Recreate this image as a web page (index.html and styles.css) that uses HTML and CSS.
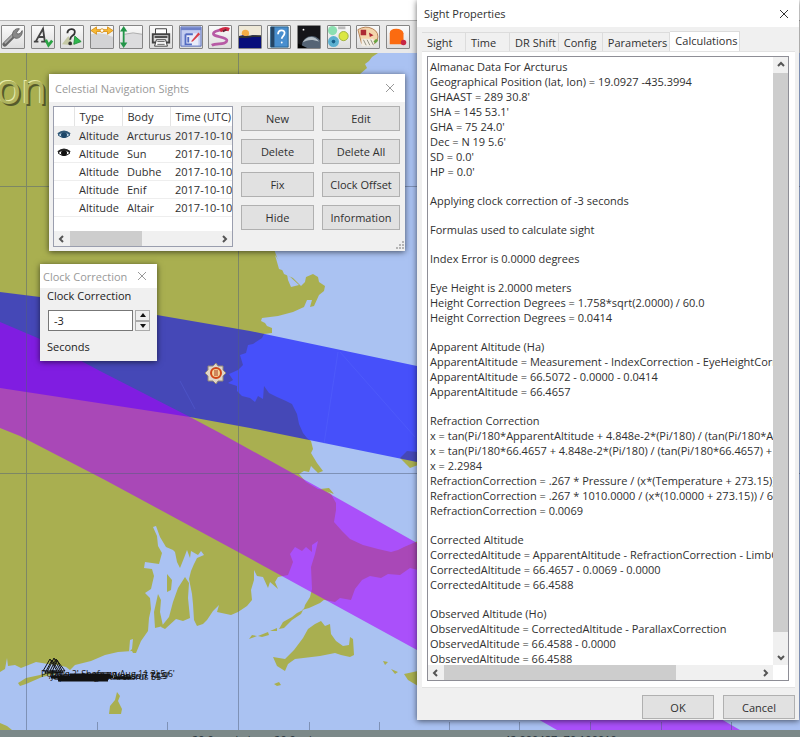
FILE: index.html
```html
<!DOCTYPE html>
<html lang="en">
<head>
<meta charset="utf-8">
<title>Celestial Navigation</title>
<link rel="stylesheet" href="styles.css">
</head>
<body>
<div class="desktop">
  <div class="titlestrip"></div>
  <div class="toolbar" role="toolbar" aria-label="Chart tools">
    <button class="tool" aria-label="Options"><svg viewBox="0 0 24 24"><path d="M3 20L14 9" stroke="#666" stroke-width="5" stroke-linecap="round"/><path d="M3 19L13 9" stroke="#aaa" stroke-width="2"/><path d="M12 12c-2-5 2-10 7-9l-3 4 1 2 3-1 2-3c1 5-4 10-8 8z" fill="#888" stroke="#666"/></svg></button>
    <button class="tool" aria-label="Text"><svg viewBox="0 0 24 24"><path d="M2 17h5M10 17h6M4 17L12 3l2 14M7 12h6" fill="none" stroke="#444" stroke-width="2"/><path d="M15 15l3 6 4-5" fill="none" stroke="#2ba344" stroke-width="3"/></svg></button>
    <button class="tool" aria-label="Query"><svg viewBox="0 0 24 24"><path d="M1 20l7-9 5 10z" fill="#c5c9a5"/><path d="M15 11l7 6-8 3z" fill="#2eb84c" stroke="#258d3c"/><path d="M7 8c0-6 9-6 8-1 0 4-5 3-5 8" fill="none" stroke="#333" stroke-width="2"/><circle cx="10" cy="19" r="2" fill="#333"/></svg></button>
    <button class="tool" aria-label="Horizontal scale"><svg viewBox="0 0 24 24"><path d="M0 9q12-3 24 3v12H0z" fill="#d3d3d5"/><path d="M0 5l6-4v3h12V1l6 4-6 4V6H6v3z" fill="#f8ba35" stroke="#da941d"/><circle cx="12" cy="5" r="2" fill="#fff" stroke="#da941d"/></svg></button>
    <button class="tool" aria-label="Vertical scale"><svg viewBox="0 0 24 24"><path d="M5 9q9-3 19 0v15H5z" fill="#dcdcde"/><path d="M5 9q9-3 19 0" fill="none" stroke="#aaa"/><path d="M4 0l4 6H5v12h3l-4 6-4-6h3V6H0z" fill="#239549"/></svg></button>
    <button class="tool" aria-label="Print"><svg viewBox="0 0 24 24"><path d="M6 9V3h12v6" fill="#fff" stroke="#333"/><path d="M3 9h18v9H3z" fill="#ddd" stroke="#444" stroke-width="2"/><path d="M5 12h14" stroke="#444" stroke-width="2"/><path d="M7 15h10l2 7H5z" fill="#fff" stroke="#333"/><path d="M8 17h8M8 20h8" stroke="#555"/></svg></button>
    <button class="tool" aria-label="Route manager"><svg viewBox="0 0 24 24"><path d="M1 1h22v21H1z" fill="#c3cdf0" stroke="#5369b7"/><path d="M1 3h22" stroke="#6d80c9" stroke-width="3"/><path d="M6 8h14v13H6z" fill="#e9ecfa"/><path d="M6 9h8M6 9v11h7M9 12v6" fill="none" stroke="#526ac1" stroke-width="2"/><path d="M12 17l8-10 2 2-8 8z" fill="#d83f49"/></svg></button>
    <button class="tool" aria-label="Track"><svg viewBox="0 0 24 24"><path d="M21 4C8 3 2 8 6 10s16 3 13 7-11 1-16 4" fill="none" stroke="#b75aa5" stroke-width="3"/><path d="M22 4q-5-2-10 1" fill="none" stroke="#d12b45" stroke-width="4"/><path d="M19 4l-4 2" stroke="#5b2636" stroke-width="2"/></svg></button>
    <button class="tool" aria-label="Tides"><svg viewBox="0 0 24 24"><path d="M0 0h24v24H0z" fill="#eee8d7"/><circle cx="7" cy="8" r="4" fill="#f5ad45"/><path d="M0 11l4-1 5 2 6-2 9 1v13H0z" fill="#080f7b"/><path d="M0 12h8l7-1h9" stroke="#303335" stroke-width="2"/></svg></button>
    <button class="tool" aria-label="Help"><svg viewBox="0 0 24 24"><path d="M3 1h19v22H3z" fill="#488ece" stroke="#23628f"/><path d="M5 1v22" stroke="#254564" stroke-width="4"/><path d="M11 9c0-6 8-5 7-1 0 3-3 3-3 6" fill="none" stroke="#fff" stroke-width="2"/><circle cx="15" cy="18" r="1" fill="#fff"/></svg></button>
    <button class="tool" aria-label="Celestial navigation"><svg viewBox="0 0 24 24"><path d="M0 0h24v24H0z" fill="#151519"/><circle cx="15" cy="22" r="11" fill="#556475"/><path d="M5 18c4-8 14-8 18-1-8-3-13-2-18 1z" fill="#b5bfc6"/><path d="M0 19l10 5H0z" fill="#000"/><circle cx="6" cy="4" r="1" fill="#fff"/></svg></button>
    <button class="tool" aria-label="Satellites"><svg viewBox="0 0 24 24"><circle cx="5" cy="5" r="5" fill="#8ce0b1"/><circle cx="17" cy="11" r="5" fill="#dbe742" stroke="#9caf3b"/><circle cx="6" cy="17" r="6" fill="#5cb0d0"/><circle cx="6" cy="17" r="2" fill="#175d87"/><path d="M11 2h8" stroke="#bbb" stroke-width="3"/></svg></button>
    <button class="tool" aria-label="Palette"><svg viewBox="0 0 24 24"><path d="M1 4q8-5 16-1t5 13l-5 5-12-2z" fill="#f4d5ab" stroke="#b17b4f"/><path d="M4 4h6v6H4zM13 7l5 3-4 2z" fill="#ad2934"/><path d="M5 14h13l1 8H5z" fill="#f3eee4"/><path d="M7 15l3 6M11 15l3 6M15 15l3 6" stroke="#8b8b7c"/><path d="M19 18l3-3" stroke="#67a443" stroke-width="3"/></svg></button>
    <button class="tool" aria-label="Record"><svg viewBox="0 0 24 24"><path d="M3 20V8q0-5 7-5t8 5v12z" fill="#fb6b10"/><circle cx="18" cy="18" r="3" fill="#c62745"/></svg></button>
  </div>
  <main class="chart">
    <svg class="map" viewBox="0 53 800 677" preserveAspectRatio="xMinYMin slice" aria-label="Nautical chart">
      <path class="water" d="M0 53h1600v1400H0z"/>
      <g class="land">
        <path d="M0 53H378L372 57 369 61 365 64 367 68 360 74 340 100 300 180 272 240 275 252 278 260 281 267 284 274 293 278 301 286 305 282 306 277 313 274 318 277 319 282 325 286 324 291 319 295 314 306 310 307 312 300 307 300 304 307 293 312 278 316 262 318 261 321 265 323 267 326 272 328 272 333 264 334 262 338 253 344 248 345 246 353 240 355 243 365 238 370 229 374 233 380 228 383 237 386 237 391 242 396 250 398 255 402 258 396 263 399 264 386 269 393 277 397 286 401 292 404 297 414 299 424 303 433 307 438 311 441 313 449 311 453 317 463 323 471 318 473 311 466 309 472 304 471 299 474 306 482 318 489 325 490 331 494 336 503 336 510 334 522 342 531 350 539 363 545 378 549 391 552 398 550 404 547 418 541V570L410 568 400 575 388 574 381 578 370 576 362 580 355 589 351 600 340 598 335 602 325 600 314 600 311 606 304 609 305 605 310 597 312 589 311 567 315 554 318 541 312 545 312 552 306 547 302 551 295 547 290 554 293 562 290 570 288 575 278 577 275 582 278 589 270 582 268 588 263 577 257 576 254 570 254 580 251 590 252 600 247 606 238 612 231 615 217 612 219 605 213 611 207 620 203 624 197 626 194 620 193 604 192 594 189 579 191 571 194 564 197 558 204 555 201 551 198 555 191 551 190 558 187 550 184 558 180 568 177 562 175 552 173 550 166 547 160 537 156 526 153 527 157 536 158 546 162 553 159 564 145 562 144 568 152 569 154 576 151 589 145 593 150 598 151 609 149 618 148 631 141 641 136 653 133 653 132 651 118 652 105 655 91 661 75 665 70 670 66 667 58 665 48 664 36 662 21 668 15 665 8 666 7 658 5 669 0 672z"/>
        <path d="M158 594L161 600 160 612 163 626 155 628 154 612zM167 574L172 580 171 590 167 592 167 582zM185 577L189 583 188 598 190 618 183 621 176 619 165 629 161 627 169 617 173 602 178 588z"/>
        <path d="M18 683L26 678 40 675 50 671 56 674 42 677 26 684 20 686zM117 692L120 696 118 701 122 709 121 714 109 714 110 706 115 700zM273 657L285 659 294 650 303 638 308 629 315 624 321 621 325 626 330 624 331 634 336 641 343 646 349 645 350 637 353 639 354 655 350 657 341 655 335 653 320 656 295 659 288 664 285 671 277 666zM249 639L252 635 257 636zM258 636L268 632 269 635 262 637zM270 631L277 628 277 631zM279 629L283 622 292 617 297 613 303 610 301 614 292 620 284 628zM302 610L309 604 311 597 325 599 320 603 309 608zM274 684L279 682 281 685 277 686zM383 661L388 662 385 665zM391 669L398 672 395 674zM404 674L418 671V686L408 680zM320 489L329 488 334 494z"/>
        <path d="M400 458L407 451 418 452V465L410 468 404 462zM0 723L7 726 12 730H0z"/>
      </g>
      <path class="water" d="M130 640l3-1-1 10-3 3zM275 255l5 7 5 9-6-2zM287 274l12 11-8 2-3-7z"/>
      <path class="band-blue" d="M0 292L40 297 157 315 250 331 417 366 640 415V510L417 462 250 428 190 417 0 388z"/>
      <path class="band-purple" d="M0 322L40 339 100 371 190 417 220 433 323 490 417 543 740 730H557L417 650 240 553 105 480 20 436 0 428z"/>
      <path class="band-line" d="M338 352l-14 92M340 352l75 85M180 381l15 28"/>
      <path class="gridline" d="M26 53V730M238 53V730M0 186H800M0 473H800M97 722v8M167 722v8M309 722v8M379 722v8M449 722v8M519 722v8M590 722v8M661 722v8M731 722v8"/>
      <g class="place"><text class="place-light" x="-5" y="103">on</text><text class="place-dark" x="-2" y="106">on</text><text class="place-fill" x="-4" y="104">on</text></g>
      <path class="fixes" d="M43 671l7-12 7 12zM47 672l7-14 7 14zM50 671l6-12 9 12zM45 673l7-13 8 13zM52 672l5-12 6 13z"/>
      <g class="marks"><text x="41" y="677">Polaris 2' Shef sun Aug 11 2' 5.6'</text><text x="49" y="679">Aldebaran 10.3 Venus 7 74.9'</text><text x="51" y="680">Jupiter MagnetArcturus 55'</text><text x="54" y="679">Arcturus 13.3 Star sun 14 9'</text></g>
      <path class="smear" d="M51 677h62M58 680h50M70 675h40M114 678h17"/>
      <g><path d="M216 363l2 3 5 0 0 4 3 3-3 3 0 5-5 0-2 3-3-3-5 0 0-5-3-3 3-3 0-4 5 0z" fill="#e0d5c9" stroke="#908679"/><circle cx="216" cy="373" r="5" fill="#f4d39a" stroke="#d04719" stroke-width="2"/><path d="M214 371h4M214 373h4M214 375h4" stroke="#a93b20"/></g>
    </svg>
  </main>
  <footer class="status"><span class="status-distance">20.0 nm/min or 20.0 min</span><span>42.000487 -70.100010</span></footer>

  <section class="window sights" aria-label="Celestial Navigation Sights">
    <header class="caption faded"><h2>Celestial Navigation Sights</h2><button class="close" aria-label="Close"><svg viewBox="0 0 10 10"><path d="M1 1l8 8M9 1l-8 8"/></svg></button></header>
    <div class="sights-body">
      <div class="list">
        <div class="list-clip">
        <table>
          <thead><tr><th class="eye" aria-label="Visible"></th><th>Type</th><th>Body</th><th>Time (UTC)</th></tr></thead>
          <tbody>
            <tr class="selected"><td class="eye"><svg viewBox="0 0 14 10"><path d="M1 5q6-7 12 0-6 5-12 0z" fill="#b9d1e4" stroke="#315877"/><circle cx="7" cy="5" r="3" fill="#1d4668"/><path d="M1 4q6-5 12 0" fill="none" stroke="#315877" stroke-width="2"/></svg></td><td>Altitude</td><td>Arcturus</td><td>2017-10-10</td></tr>
            <tr><td class="eye"><svg viewBox="0 0 14 10"><path d="M1 5q6-7 12 0-6 5-12 0z" fill="#fff" stroke="#222"/><circle cx="7" cy="5" r="3" fill="#111"/><path d="M1 4q6-5 12 0" fill="none" stroke="#222" stroke-width="2"/></svg></td><td>Altitude</td><td>Sun</td><td>2017-10-10</td></tr>
            <tr><td></td><td>Altitude</td><td>Dubhe</td><td>2017-10-10</td></tr>
            <tr><td></td><td>Altitude</td><td>Enif</td><td>2017-10-10</td></tr>
            <tr><td></td><td>Altitude</td><td>Altair</td><td>2017-10-10</td></tr>
          </tbody>
        </table>
        </div>
        <div class="hbar"><svg viewBox="0 0 10 10"><path d="M6 2L3 5l3 3"/></svg><div class="track"><div class="thumb thumb-list"></div></div><svg viewBox="0 0 10 10"><path d="M4 2l3 3-3 3"/></svg></div>
      </div>
      <div class="actions">
        <button class="btn">New</button><button class="btn">Edit</button>
        <button class="btn">Delete</button><button class="btn">Delete All</button>
        <button class="btn">Fix</button><button class="btn">Clock Offset</button>
        <button class="btn">Hide</button><button class="btn">Information</button>
      </div>
    </div>
    <svg class="grip" viewBox="0 0 9 9"><path d="M7 0h2v2H7zM7 3h2v2H7zM4 3h2v2H4zM7 6h2v2H7zM4 6h2v2H4zM1 6h2v2H1z"/></svg>
  </section>

  <section class="window clock" aria-label="Clock Correction">
    <header class="caption faded"><h2>Clock Correction</h2><button class="close" aria-label="Close"><svg viewBox="0 0 10 10"><path d="M1 1l8 8M9 1l-8 8"/></svg></button></header>
    <div class="clock-body">
      <label for="seconds">Clock Correction</label>
      <div class="spin"><input id="seconds" type="text" value="-3"><div class="spin-buttons"><button aria-label="Increase"><svg viewBox="0 0 6 4"><path d="M3 0l3 4H0z"/></svg></button><button aria-label="Decrease"><svg viewBox="0 0 6 4"><path d="M0 0h6L3 4z"/></svg></button></div></div>
      <span>Seconds</span>
    </div>
  </section>

  <section class="window props" aria-label="Sight Properties">
    <header class="caption"><h2>Sight Properties</h2><button class="close" aria-label="Close"><svg viewBox="0 0 10 10"><path d="M1 1l8 8M9 1l-8 8"/></svg></button></header>
    <div class="props-body">
      <div class="tabs" role="tablist"><button role="tab">Sight</button><button role="tab">Time</button><button role="tab">DR Shift</button><button role="tab">Config</button><button role="tab">Parameters</button><button role="tab" class="active" aria-selected="true">Calculations</button></div>
      <div class="panel">
        <div class="textbox">
          <div class="output">
            <p>Almanac Data For Arcturus
Geographical Position (lat, lon) = 19.0927 -435.3994
GHAAST = 289 30.8'
SHA = 145 53.1'
GHA = 75 24.0'
Dec = N 19 5.6'
SD = 0.0'
HP = 0.0'</p>
            <p>Applying clock correction of -3 seconds</p>
            <p>Formulas used to calculate sight</p>
            <p>Index Error is 0.0000 degrees</p>
            <p>Eye Height is 2.0000 meters
Height Correction Degrees = 1.758*sqrt(2.0000) / 60.0
Height Correction Degrees = 0.0414</p>
            <p>Apparent Altitude (Ha)
ApparentAltitude = Measurement - IndexCorrection - EyeHeightCorrection
ApparentAltitude = 66.5072 - 0.0000 - 0.0414
ApparentAltitude = 66.4657</p>
            <p>Refraction Correction
x = tan(Pi/180*ApparentAltitude + 4.848e-2*(Pi/180) / (tan(Pi/180*ApparentAltitude)
x = tan(Pi/180*66.4657 + 4.848e-2*(Pi/180) / (tan(Pi/180*66.4657) + .028
x = 2.2984
RefractionCorrection = .267 * Pressure / (x*(Temperature + 273.15)) / 60.0
RefractionCorrection = .267 * 1010.0000 / (x*(10.0000 + 273.15)) / 60.0
RefractionCorrection = 0.0069</p>
            <p>Corrected Altitude
CorrectedAltitude = ApparentAltitude - RefractionCorrection - LimbCorrection
CorrectedAltitude = 66.4657 - 0.0069 - 0.0000
CorrectedAltitude = 66.4588</p>
            <p>Observed Altitude (Ho)
ObservedAltitude = CorrectedAltitude - ParallaxCorrection
ObservedAltitude = 66.4588 - 0.0000
ObservedAltitude = 66.4588</p>
          </div>
          <div class="vbar"><svg viewBox="0 0 10 10"><path d="M2 6l3-3 3 3"/></svg><div class="track"><div class="thumb thumb-v"></div></div><svg viewBox="0 0 10 10"><path d="M2 4l3 3 3-3"/></svg></div>
          <div class="hbar"><svg viewBox="0 0 10 10"><path d="M6 2L3 5l3 3"/></svg><div class="track"><div class="thumb thumb-h"></div></div><svg viewBox="0 0 10 10"><path d="M4 2l3 3-3 3"/></svg></div>
        </div>
      </div>
      <div class="dialog-actions"><button class="btn">OK</button><button class="btn">Cancel</button></div>
    </div>
  </section>
</div>
</body>
</html>
```
FILE: styles.css
```css
* { box-sizing: border-box; }
body { margin: 0; font: 11px/15px "Open Sans", "Noto Sans", sans-serif; color: #303030; }
button, input { font: inherit; color: inherit; margin: 0; padding: 0; }
svg { display: block; }
h2, p { margin: 0; font: inherit; }

.desktop { position: relative; display: flex; flex-direction: column; height: 100vh; min-height: 737px; overflow: hidden; background: #fff; }
.titlestrip { height: 20px; background: #fff; }
.toolbar { display: flex; justify-content: space-between; align-items: center; height: 33px; padding: 0 390px 0 1px; border-top: 1px solid #b5b5b5; background: #e9e9e9; }
.tool { width: 24px; height: 24px; border: 1px solid #858585; border-radius: 1px; background: linear-gradient(#fafafa, #ddd); }
.tool svg { width: 22px; height: 22px; fill: none; }
.chart { flex: 1; min-height: 0; overflow: hidden; background: #aac2f2; }
.map { width: 100%; height: 100%; }
.water { fill: #aac2f2; }
.land { fill: #a9af50; }
.band-blue { fill: #00f; opacity: .59; }
.band-purple { fill: #aa00ff; opacity: .59; }
.band-line { fill: none; stroke: #6b7dff; opacity: .2; }
.gridline { fill: none; stroke: #51607a; opacity: .5; shape-rendering: crispEdges; }
.place { font: 42px "Open Sans", sans-serif; }
.place-light { fill: #e8ebaa; }
.place-dark { fill: #565a2b; }
.place-fill { fill: #b0b45f; }
.fixes { fill: none; stroke: #111; }
.marks { font-size: 9px; fill: #111; }
.smear { stroke: #111; stroke-width: 3; }
.status { display: flex; height: 7px; padding: 4px 0 0 192px; gap: 186px; overflow: hidden; background: #7c8989; color: #26323a; line-height: 11px; white-space: nowrap; }
.status-distance { width: 126px; }

.window { position: absolute; display: flex; flex-direction: column; background: #f0f0f0; box-shadow: 0 1px 6px #0009; }
.caption { flex: none; display: flex; align-items: center; justify-content: space-between; background: #fff; }
.faded { color: #999; }
.close { border: 0; background: none; }
.close svg { width: 10px; height: 10px; fill: none; stroke: currentColor; }
.btn { border: 1px solid #b0b0b0; background: #e1e1e1; }

.sights { left: 49px; top: 74px; width: 356px; }
.sights .caption { height: 28px; padding: 0 10px 0 6px; }
.sights-body { display: flex; gap: 8px; padding: 4px 5px 4px 4px; }
.list { display: flex; flex-direction: column; width: 180px; height: 141px; border: 1px solid #9a9eae; background: #fff; }
.list-clip { flex: 1; overflow: hidden; }
table { border-collapse: collapse; table-layout: fixed; width: 190px; }
th, td { height: 18px; padding: 0 0 0 5px; font-weight: normal; text-align: left; white-space: nowrap; border-bottom: 1px solid #eee; }
th { width: 48px; height: 19px; border-right: 1px solid #e4e4e4; }
th:last-child { width: 74px; }
th.eye { width: 20px; }
td.eye { padding: 0 0 0 3px; }
td.eye svg { width: 14px; height: 10px; }
.selected { background: #f0f0f0; }
.actions { flex: 1; display: grid; grid-template-columns: 73fr 78fr; grid-auto-rows: 25px; gap: 8px; }
.grip { position: absolute; right: 1px; bottom: 1px; width: 9px; height: 9px; fill: #b5b5b5; }

.hbar { display: flex; align-items: center; height: 15px; padding: 0 3px; gap: 3px; background: #f0f0f0; }
.hbar svg, .vbar svg { flex: none; width: 10px; height: 10px; fill: none; stroke: #555; stroke-width: 2; }
.track { flex: 1; align-self: stretch; }
.thumb { background: #cdcdcd; }
.hbar .thumb { height: 100%; }
.thumb-list { width: 49%; }
.thumb-h { width: 74%; }
.thumb-v { height: 97%; }
.vbar { display: flex; flex-direction: column; align-items: center; padding: 3px 0; gap: 3px; background: #f0f0f0; }
.vbar .thumb { width: 100%; }

.clock { left: 40px; top: 264px; width: 117px; height: 97px; }
.clock .caption { height: 24px; padding: 0 10px 0 3px; }
.clock-body { display: flex; flex-direction: column; align-items: flex-start; padding: 0 7px; color: #222; }
.spin { display: flex; gap: 2px; width: 100%; margin: 7px 0 8px; padding-left: 1px; }
.spin input { flex: 1; min-width: 0; height: 21px; padding-left: 5px; border: 1px solid #777; background: #fff; }
.spin-buttons { display: flex; flex-direction: column; width: 15px; }
.spin-buttons button { flex: 1; display: flex; align-items: center; justify-content: center; border: 1px solid #aaa; background: #eee; }
.spin-buttons svg { width: 6px; height: 4px; fill: #111; }

.props { right: 1px; top: 0; width: 382px; height: 720px; }
.props .caption { height: 27px; padding: 0 10px 0 7px; }
.props .close svg { stroke: #333; }
.props-body { flex: 1; min-height: 0; display: flex; flex-direction: column; padding: 4px 4px 1px 5px; }
.tabs { flex: none; display: flex; align-items: flex-end; height: 20px; }
.tabs button { min-width: 44px; height: 19px; padding: 0 2px 0 5px; border: 1px solid #dcdcdc; border-left: 0; border-bottom: 0; background: #f0f0f0; text-align: left; white-space: nowrap; }
.tabs .active { height: 20px; padding-bottom: 2px; background: #fff; }
.panel { flex: 1; min-height: 0; display: flex; padding: 4px 6px 6px 5px; background: #fff; border: 1px solid #e2e2e2; border-width: 1px 0; }
.textbox { flex: 1; min-width: 0; display: grid; grid-template-columns: minmax(0, 1fr) 15px; grid-template-rows: minmax(0, 1fr) 15px; border: 1px solid #8e8e96; }
.output { overflow: hidden; padding: 2px 0 0 2px; }
.output p { white-space: pre; }
.output p + p { margin-top: 14px; }
.textbox .vbar { grid-column: 2; grid-row: 1; }
.vbar .track { align-self: stretch; }
.dialog-actions { flex: none; display: flex; justify-content: flex-end; gap: 9px; padding-top: 7px; }
.dialog-actions .btn { width: 72px; height: 24px; }
```
